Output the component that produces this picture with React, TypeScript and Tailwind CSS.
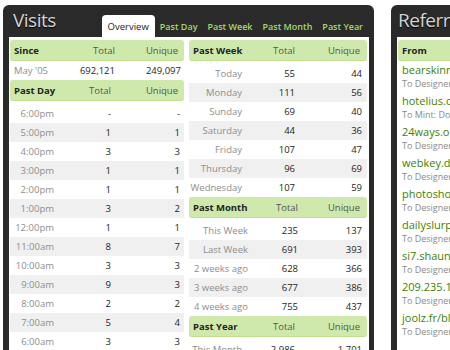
type Row = [string, string, string];

const since: Row[] = [["May '05", "692,121", "249,097"]];

const pastDay: Row[] = [
  ["6:00pm", "-", "-"],
  ["5:00pm", "1", "1"],
  ["4:00pm", "3", "3"],
  ["3:00pm", "1", "1"],
  ["2:00pm", "1", "1"],
  ["1:00pm", "3", "2"],
  ["12:00pm", "1", "1"],
  ["11:00am", "8", "7"],
  ["10:00am", "3", "3"],
  ["9:00am", "9", "3"],
  ["8:00am", "2", "2"],
  ["7:00am", "5", "4"],
  ["6:00am", "3", "3"],
];

const pastWeek: Row[] = [
  ["Today", "55", "44"],
  ["Monday", "111", "56"],
  ["Sunday", "69", "40"],
  ["Saturday", "44", "36"],
  ["Friday", "107", "47"],
  ["Thursday", "96", "69"],
  ["Wednesday", "107", "59"],
];

const pastMonth: Row[] = [
  ["This Week", "235", "137"],
  ["Last Week", "691", "393"],
  ["2 weeks ago", "628", "366"],
  ["3 weeks ago", "677", "386"],
  ["4 weeks ago", "755", "437"],
];

const pastYear: Row[] = [
  ["This Month", "2,986", "1,701"],
  ["Last Month", "3,112", "1,804"],
];

const referrers = [
  ["bearskinrug.co.uk", "To Designer"],
  ["hotelius.com", "To Mint: Download"],
  ["24ways.org", "To Designer"],
  ["webkey.de", "To Designer"],
  ["photoshoplab.com", "To Designer"],
  ["dailyslurp.com", "To Designer"],
  ["si7.shauninman.com", "To Designer"],
  ["209.235.167.104", "To Designer"],
  ["joolz.fr/blog", "To Designer"],
];

type SectionProps = {
  title: string;
  cols: string;
  rows: Row[];
  labelLeft?: boolean;
  gap?: boolean;
  pad: string;
  headPad: string;
};

const Section = ({ title, cols, rows, labelLeft, gap, pad, headPad }: SectionProps) => {
  return (
    <div>
      <div
        className={`grid ${cols} h-[21px] items-center rounded-[3px] border-b border-[#bfe08f] bg-[#cfe8ab]`}
      >
        <span className="whitespace-nowrap pl-[4px] font-bold text-[#222]">{title}</span>
        <span className="text-right text-[#555]">Total</span>
        <span className={`text-right text-[#555] ${headPad}`}>Unique</span>
      </div>
      <div className={gap ? "pt-[3px]" : ""}>
        {rows.map((r, i) => (
          <div
            key={r[0]}
            className={`grid ${cols} h-[19px] items-center ${i % 2 ? "bg-[#f0f0f0]" : ""}`}
          >
            <span
              className={`whitespace-nowrap text-[#8e8e8e] ${labelLeft ? "pl-[4px] text-left" : "text-right"}`}
            >
              {r[0]}
            </span>
            <span className="text-right text-[#1e1e1e]">{r[1]}</span>
            <span className={`text-right text-[#1e1e1e] ${pad}`}>{r[2]}</span>
          </div>
        ))}
      </div>
    </div>
  );
};

const tabs = ["Past Day", "Past Week", "Past Month", "Past Year"];

export default function App() {
  return (
    <div className="flex h-[350px] w-[450px] items-start gap-[17px] overflow-hidden bg-white pl-[3px] pt-[5px] font-['Open_Sans',sans-serif] text-[9.5px] leading-[19px]">
      {/* Visits */}
      <div className="flex w-[371px] flex-none flex-col rounded-t-[6px] bg-[#2a2a2a] pl-[6px] pr-[5px]">
        <div className="flex h-[32px] items-end justify-between">
          <h1 className="mb-[6px] self-end pl-[4px] text-[19px] leading-[22px] tracking-[-0.5px] text-[#d4d4d4] [text-shadow:0_1px_1px_#000]">
            Visits
          </h1>
          <div className="flex items-end pr-[1px]">
            <span className="flex h-[22px] items-center rounded-t-[4px] bg-white px-[6px] text-[#222]">
              Overview
            </span>
            {tabs.map((t) => (
              <span
                key={t}
                className="flex h-[22px] items-center px-[5px] text-[9px] font-semibold text-[#a5d96c]"
              >
                {t}
              </span>
            ))}
          </div>
        </div>
        <div className="flex h-[320px] gap-[5px] bg-white pl-[1px] pr-[2px] pt-[3px]">
          <div className="w-[174px] flex-none">
            <Section
              title="Since"
              cols="grid-cols-[60px_45px_1fr]"
              rows={since}
              labelLeft
              pad="pr-[3px]"
              headPad="pr-[6px]"
            />
            <Section
              title="Past Day"
              cols="grid-cols-[44px_57px_1fr]"
              rows={pastDay}
              gap
              pad="pr-[4px]"
              headPad="pr-[6px]"
            />
          </div>
          <div className="w-[178px] flex-none">
            <Section
              title="Past Week"
              cols="grid-cols-[53px_53px_1fr]"
              rows={pastWeek}
              gap
              pad="pr-[5px]"
              headPad="pr-[7px]"
            />
            <Section
              title="Past Month"
              cols="grid-cols-[59px_50px_1fr]"
              rows={pastMonth}
              gap
              pad="pr-[5px]"
              headPad="pr-[7px]"
            />
            <Section
              title="Past Year"
              cols="grid-cols-[53px_53px_1fr]"
              rows={pastYear}
              gap
              pad="pr-[5px]"
              headPad="pr-[7px]"
            />
          </div>
        </div>
      </div>

      {/* Referrers */}
      <div className="flex w-[200px] flex-none flex-col rounded-t-[6px] bg-[#2a2a2a] pl-[6px]">
        <div className="flex h-[32px] items-end">
          <h1 className="mb-[6px] whitespace-nowrap pl-[1px] text-[19px] leading-[22px] tracking-[-0.5px] text-[#d4d4d4] [text-shadow:0_1px_1px_#000]">
            Referrers
          </h1>
        </div>
        <div className="h-[320px] bg-white pl-[1px] pt-[3px]">
          <div className="flex h-[21px] items-center rounded-[3px] border-b border-[#bfe08f] bg-[#cfe8ab] pl-[4px] font-bold text-[#222]">
            From
          </div>
          {referrers.map(([site, to]) => (
            <div key={site} className="flex h-[31px] flex-col justify-center gap-[1px] whitespace-nowrap pl-[4px]">
              <span className="text-[11px] leading-[14px] text-[#3f7f00]">{site}</span>
              <span className="text-[9px] leading-[12px] text-[#8a8a8a]">{to}</span>
            </div>
          ))}
        </div>
      </div>
    </div>
  );
}
